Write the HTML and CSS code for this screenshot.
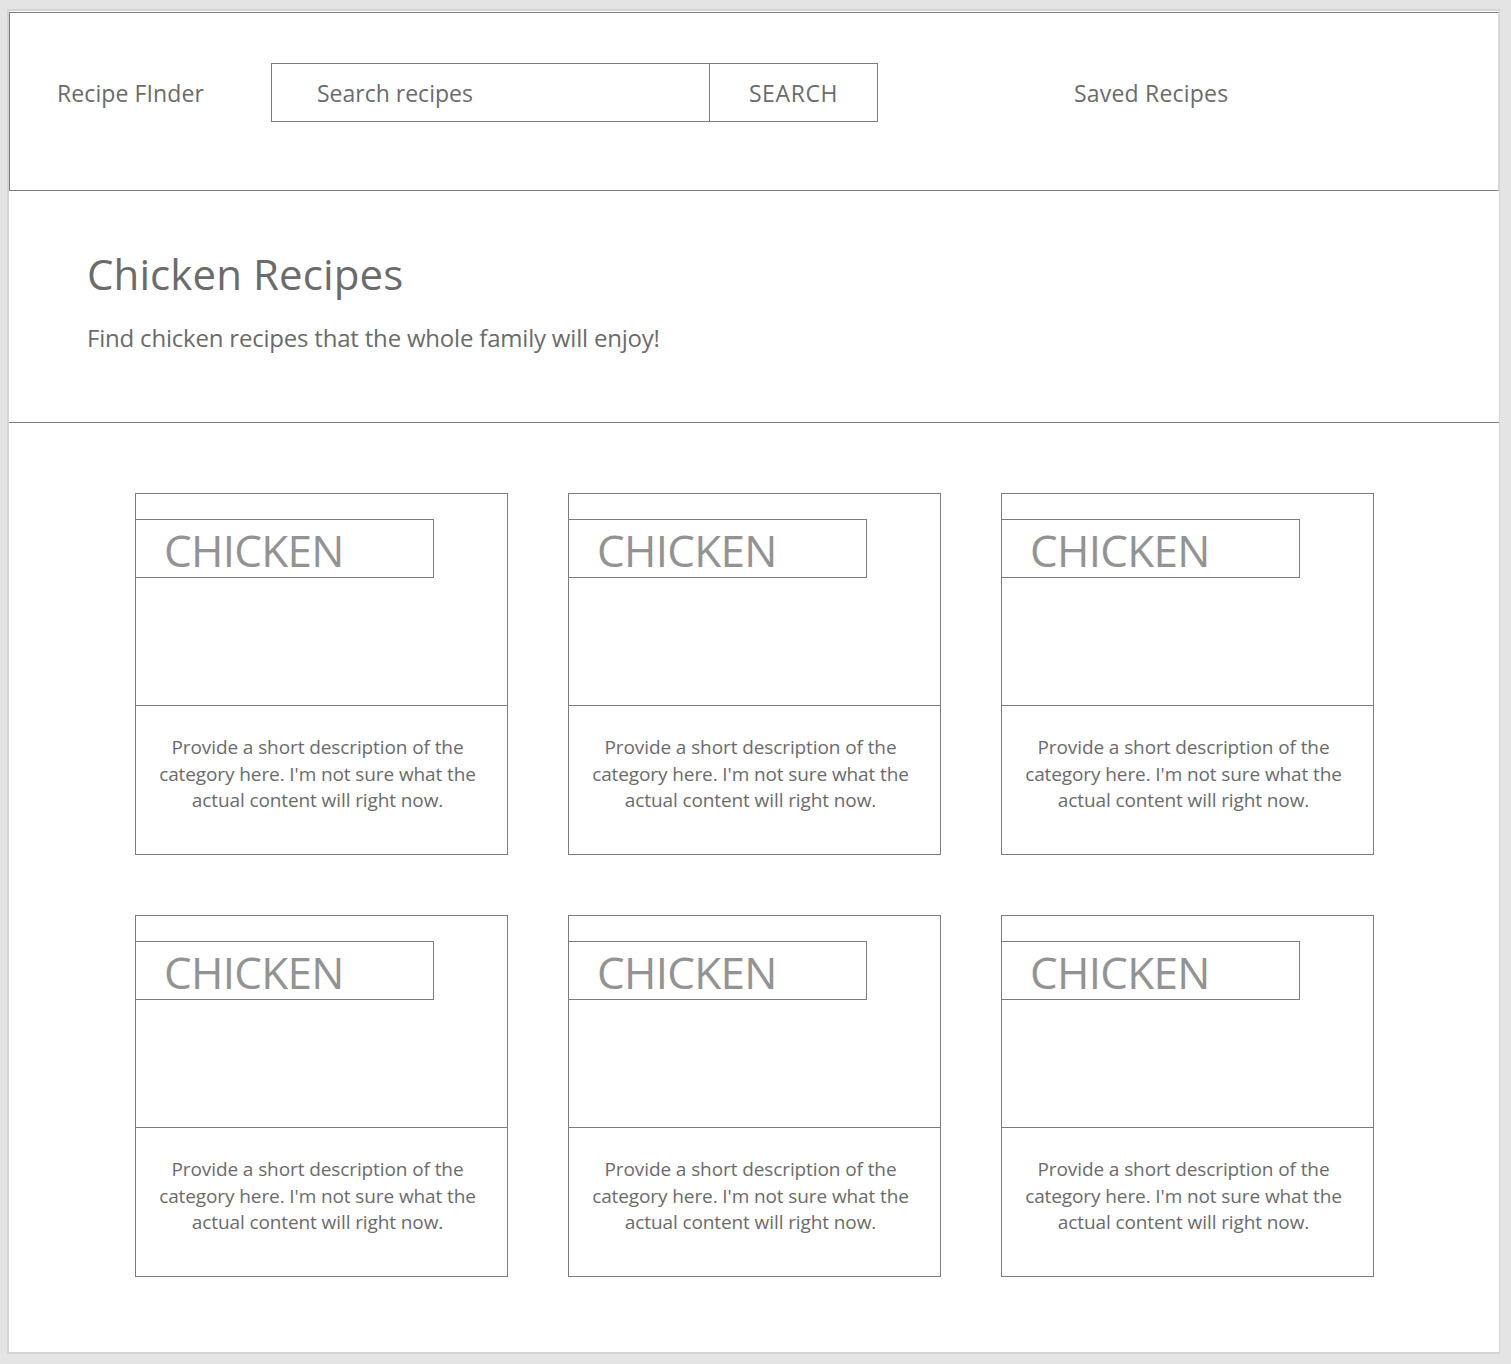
FILE: index.html
```html
<!DOCTYPE html>
<html lang="en">
<head>
<meta charset="utf-8">
<title>Recipe Finder</title>
<link rel="stylesheet" href="styles.css">
</head>
<body>
<div class="page">
  <header class="topbar">
    <div class="logo">Recipe FInder</div>
    <form class="search">
      <div class="search-input">Search recipes</div>
      <div class="search-btn">SEARCH</div>
    </form>
    <div class="saved">Saved Recipes</div>
  </header>
  <section class="hero">
    <h1 class="hero-title">Chicken Recipes</h1>
    <p class="hero-sub">Find chicken recipes that the whole family will enjoy!</p>
  </section>
  <div class="divider"></div>
  <main class="grid">
    <div class="card">
      <div class="card-img"><div class="card-label">CHICKEN</div></div>
      <div class="card-desc">Provide a short description of the category here. I'm not sure what the actual content will right now.</div>
    </div>
    <div class="card">
      <div class="card-img"><div class="card-label">CHICKEN</div></div>
      <div class="card-desc">Provide a short description of the category here. I'm not sure what the actual content will right now.</div>
    </div>
    <div class="card">
      <div class="card-img"><div class="card-label">CHICKEN</div></div>
      <div class="card-desc">Provide a short description of the category here. I'm not sure what the actual content will right now.</div>
    </div>
    <div class="card">
      <div class="card-img"><div class="card-label">CHICKEN</div></div>
      <div class="card-desc">Provide a short description of the category here. I'm not sure what the actual content will right now.</div>
    </div>
    <div class="card">
      <div class="card-img"><div class="card-label">CHICKEN</div></div>
      <div class="card-desc">Provide a short description of the category here. I'm not sure what the actual content will right now.</div>
    </div>
    <div class="card">
      <div class="card-img"><div class="card-label">CHICKEN</div></div>
      <div class="card-desc">Provide a short description of the category here. I'm not sure what the actual content will right now.</div>
    </div>
  </main>
</div>
</body>
</html>
```

FILE: styles.css
```css
html, body {
  margin: 0;
  padding: 0;
}
body {
  background: #e4e4e4;
  padding: 9px 0 0 7px;
  font-family: "Open Sans", "Noto Sans", sans-serif;
  color: #6b6b6b;
  height: 1364px;
  box-sizing: border-box;
  overflow: hidden;
}
.page {
  width: 1493px;
  height: 1345px;
  box-sizing: border-box;
  background: #ffffff;
  border: 2px solid #d4d4d4;
  border-right-width: 1px;
  padding-top: 1px;
}
.topbar {
  box-sizing: border-box;
  height: 179px;
  border: 1px solid #7c7c7c;
  border-right-color: #d9d9d9;
  display: flex;
  align-items: flex-start;
  padding: 50px 0 0 47px;
}
.logo {
  width: 214px;
  height: 59px;
  display: flex;
  align-items: center;
  font-size: 23px;
  letter-spacing: 0.1px;
}
.search {
  display: flex;
  margin: 0;
  height: 59px;
}
.search-input {
  box-sizing: border-box;
  width: 439px;
  height: 59px;
  border: 1px solid #7c7c7c;
  display: flex;
  align-items: center;
  padding-left: 45px;
  font-size: 23px;
  letter-spacing: 0px;
}
.search-btn {
  box-sizing: border-box;
  width: 168px;
  height: 59px;
  border: 1px solid #7c7c7c;
  border-left: none;
  display: flex;
  align-items: center;
  justify-content: center;
  font-size: 23px;
  letter-spacing: 0.6px;
}
.saved {
  margin-left: 196px;
  height: 59px;
  display: flex;
  align-items: center;
  font-size: 23px;
  letter-spacing: 0.2px;
}
.hero {
  padding: 53px 0 0 78px;
  height: 179px;
  box-sizing: border-box;
}
.hero-title {
  margin: 0;
  font-weight: 400;
  font-size: 42px;
  line-height: 60px;
  letter-spacing: 0.1px;
}
.hero-sub {
  margin: 18px 0 0;
  font-size: 24px;
  line-height: 32px;
  letter-spacing: -0.2px;
}
.divider {
  height: 1px;
  background: #7c7c7c;
  margin-top: 52px;
  margin-right: 0;
}
.grid {
  display: grid;
  grid-template-columns: repeat(3, 373px);
  column-gap: 60px;
  row-gap: 60px;
  padding: 70px 0 0 126px;
}
.card {
  box-sizing: border-box;
  height: 362px;
  border: 1px solid #7c7c7c;
  display: flex;
  flex-direction: column;
}
.card-img {
  height: 212px;
  box-sizing: border-box;
  border-bottom: 1px solid #7c7c7c;
  padding-top: 25px;
}
.card-label {
  box-sizing: border-box;
  width: 299px;
  height: 59px;
  margin-left: -1px;
  border: 1px solid #7c7c7c;
  padding-left: 28px;
  font-size: 44px;
  line-height: 60px;
  color: #939393;
  letter-spacing: -0.7px;
}
.card-desc {
  flex: 1;
  padding: 28px 20px 0 12px;
  text-align: center;
  font-size: 19px;
  line-height: 26.5px;
  letter-spacing: -0.1px;
}
```
